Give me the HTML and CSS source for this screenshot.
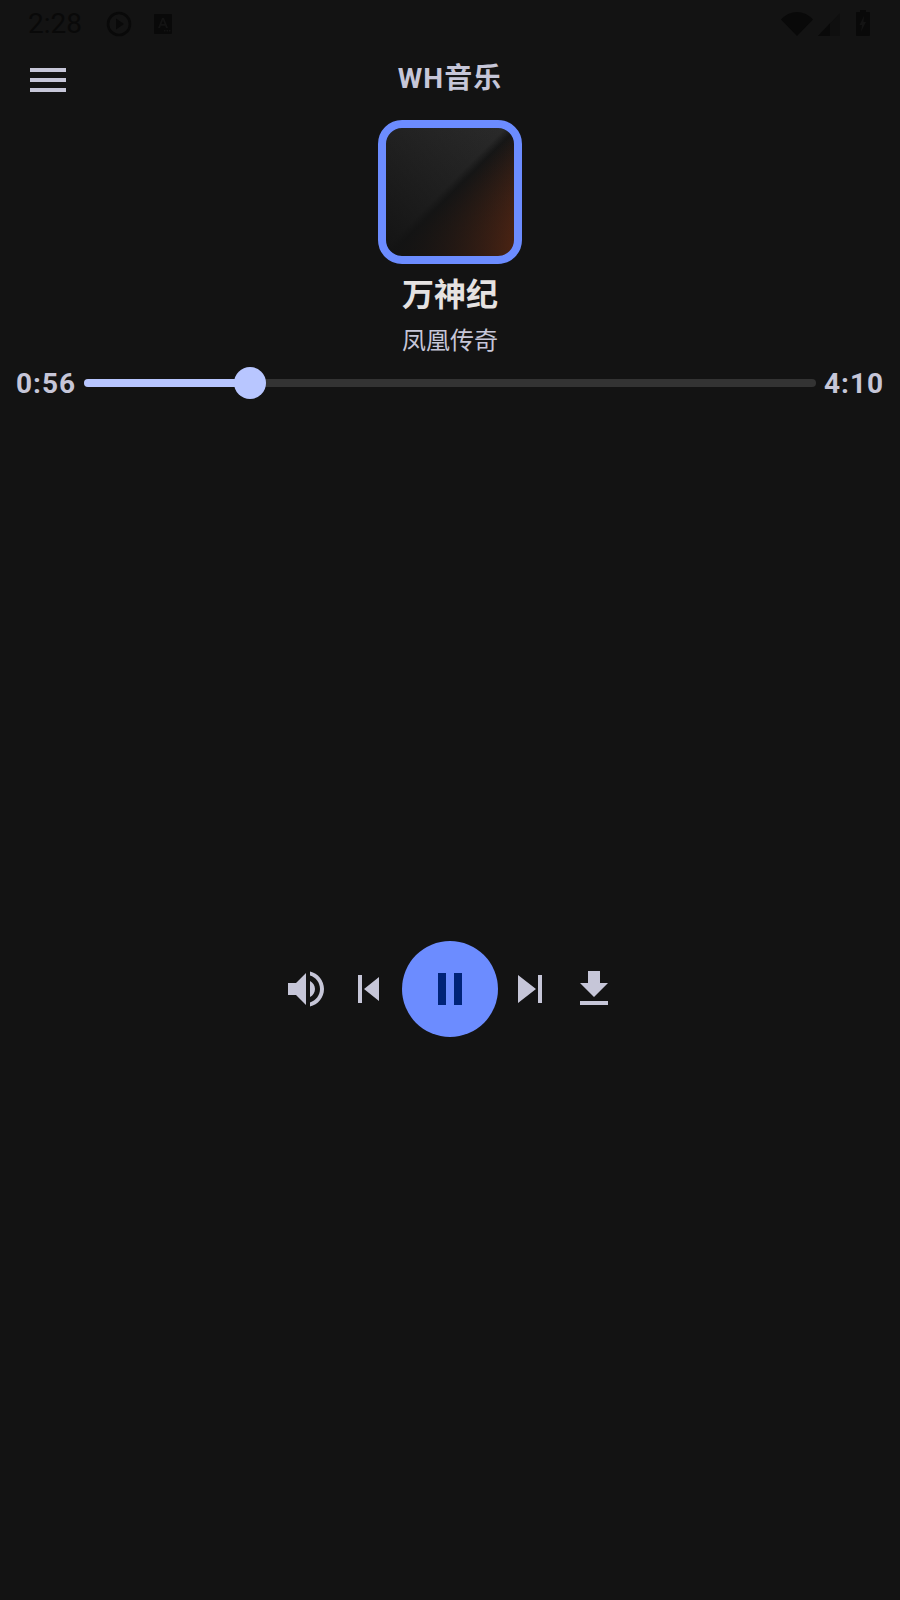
FILE: index.html

```html
<!DOCTYPE html>
<html lang="zh">
<head>
    <meta charset="utf-8">
    <title>WH音乐</title>
    <link rel="stylesheet" href="styles.css">
</head>
<body>
    <!-- status bar, nearly invisible on the dark page -->
    <div class="status">
        <span class="clock">2:28</span>
        <svg class="play-note" width="26" height="26" viewBox="0 0 26 26">
            <circle cx="13" cy="13" r="11" fill="none" stroke="currentColor" stroke-width="2.6"/>
            <path d="M10 7.500v11l8-5.500z" fill="currentColor"/>
        </svg>
        <svg class="a-note" width="18" height="20" viewBox="0 0 18 20">
            <path fill-rule="evenodd" fill="currentColor" d="M1 0h16a1 1 0 0 1 1 1v18a1 1 0 0 1-1 1H1a1 1 0 0 1-1-1V1a1 1 0 0 1 1-1zM8 4l-4 10h2l.8-2.200h4.400l.8 2.200h2L10 4zM7.500 10L9 6l1.500 4zM10 16v1.500h1.500V16zM12.500 16v1.500H14V16zM15 16v1.500h1.500V16z"/>
        </svg>
        <span class="status-gap"></span>
        <svg class="wifi" width="32" height="24" viewBox="0 0 32 24">
            <path d="M0 7.500C4 3 10 0 16 0s12 3 16 7.500L16 24z" fill="currentColor"/>
        </svg>
        <svg class="signal" width="22" height="23" viewBox="0 0 22 23">
            <path d="M22 0v23H0z" fill="#0f0f0f"/>
            <path d="M12 10.500V23H0z" fill="currentColor"/>
        </svg>
        <svg class="battery" width="14" height="26" viewBox="0 0 14 26">
            <path fill-rule="evenodd" fill="currentColor" d="M4 0h6v2h3a1 1 0 0 1 1 1v22a1 1 0 0 1-1 1H1a1 1 0 0 1-1-1V3a1 1 0 0 1 1-1h3zM8 6L3.500 15H6l-1 7 5-10H7.500z"/>
        </svg>
    </div>

    <!-- app bar -->
    <div class="appbar">
        <div class="menu">
            <span></span>
            <span></span>
            <span></span>
        </div>
        <div class="app-title">WH音乐</div>
    </div>

    <!-- song info -->
    <div class="song">
        <div class="cover"></div>
        <div class="song-name">万神纪</div>
        <div class="singer">凤凰传奇</div>
    </div>

    <!-- progress -->
    <div class="progress">
        <span class="time">0:56</span>
        <div class="track">
            <div class="track-done"></div>
            <div class="thumb"></div>
        </div>
        <span class="time">4:10</span>
    </div>

    <!-- player buttons -->
    <div class="controls">
        <svg class="ctrl volume" width="48" height="48" viewBox="0 0 24 24">
            <path d="M3 9v6h4l5 5V4L7 9H3zm13.500 3c0-1.770-1.020-3.290-2.500-4.030v8.050c1.480-.73 2.500-2.250 2.500-4.020zM14 3.230v2.060c2.890.86 5 3.540 5 6.710s-2.110 5.850-5 6.710v2.060c4.010-.91 7-4.490 7-8.770s-2.990-7.860-7-8.770z"/>
        </svg>
        <svg class="ctrl" width="48" height="48" viewBox="0 0 48 48">
            <path d="M12 10h4v28h-4zM18 24l15-12v24z"/>
        </svg>
        <div class="pause">
            <span></span>
            <span></span>
        </div>
        <svg class="ctrl" width="48" height="48" viewBox="0 0 48 48">
            <path d="M12 10l18 14-18 14zM32 10h4v28h-4z"/>
        </svg>
        <svg class="ctrl download" width="48" height="48" viewBox="0 0 24 24">
            <path d="M19 9h-4V3H9v6H5l7 7 7-7zM5 18v2h14v-2H5z"/>
        </svg>
    </div>
</body>
</html>
```

FILE: styles.css

```css
/* Page */
body {
    margin: 0;
    height: 1600px;
    overflow: hidden;
    background: #131313;
    font-family: Roboto, "Noto Sans CJK SC", sans-serif;
    color: #c6c6d8;
}

/* Status bar */
.status {
    display: flex;
    align-items: center;
    height: 48px;
    padding: 0 30px 0 28px;
    color: #090909;
}
.clock {
    font-size: 28px;
    line-height: 50px;
    width: 78px;
}
.a-note {
    margin-left: 22px;
}
.status-gap {
    flex: 1;
}
.signal {
    margin-left: 5px;
}
.battery {
    margin-left: 16px;
    margin-bottom: 2px;
}

/* App bar */
.appbar {
    position: relative;
    display: flex;
    align-items: center;
    justify-content: center;
    height: 48px;
    margin-top: 8px;
}
.menu {
    position: absolute;
    left: 30px;
    top: 12px;
    width: 36px;
    height: 24px;
    display: flex;
    flex-direction: column;
    justify-content: space-between;
}
.menu span {
    display: block;
    height: 4px;
    background: #c6c6d8;
}
.app-title {
    font-size: 28px;
    font-weight: 700;
    letter-spacing: 1px;
    line-height: 46px;
    margin-bottom: 2px;
}

/* Cover and names */
.song {
    display: flex;
    flex-direction: column;
    align-items: center;
    margin-top: 16px;
}
.cover {
    box-sizing: border-box;
    width: 144px;
    height: 144px;
    border: 8px solid #6c8cff;
    border-radius: 24px;
    background:
        linear-gradient(45deg, rgba(19, 19, 19, 0.95) 8%, rgba(19, 19, 19, 0) 92%),
        linear-gradient(135deg, #2e2e2e 0%, #2a2a2a 47%, #161616 51%, #8a3512 100%);
    background-origin: border-box;
}
.song-name {
    font-size: 32px;
    font-weight: 700;
    line-height: 44px;
    margin-top: 9px;
    color: #e5e2e1;
}
.singer {
    font-size: 24px;
    line-height: 36px;
    margin-top: 6px;
}

/* Progress row */
.progress {
    display: flex;
    align-items: center;
    gap: 8px;
    height: 48px;
    padding: 0 16px;
}
.time {
    font-size: 28px;
    font-weight: 700;
    letter-spacing: 1px;
    width: 60px;
    text-align: center;
}
.track {
    position: relative;
    flex: 1;
    height: 8px;
    border-radius: 4px;
    background: #333333;
}
.track-done {
    width: 166px;
    height: 8px;
    border-radius: 4px;
    background: #b8c6ff;
}
.thumb {
    position: absolute;
    left: 150px;
    top: -12px;
    width: 32px;
    height: 32px;
    border-radius: 50%;
    background: #b8c6ff;
}

/* Player buttons */
.controls {
    display: flex;
    align-items: center;
    justify-content: center;
    gap: 8px;
    margin-top: 534px;
}
.ctrl {
    display: block;
    fill: #c6c6d8;
}
.volume {
    margin-right: 8px;
}
.download {
    margin-left: 8px;
}
.pause {
    display: flex;
    align-items: center;
    justify-content: center;
    gap: 8px;
    width: 96px;
    height: 96px;
    border-radius: 50%;
    background: #6c8cff;
}
.pause span {
    width: 8px;
    height: 32px;
    background: #002378;
}
```
